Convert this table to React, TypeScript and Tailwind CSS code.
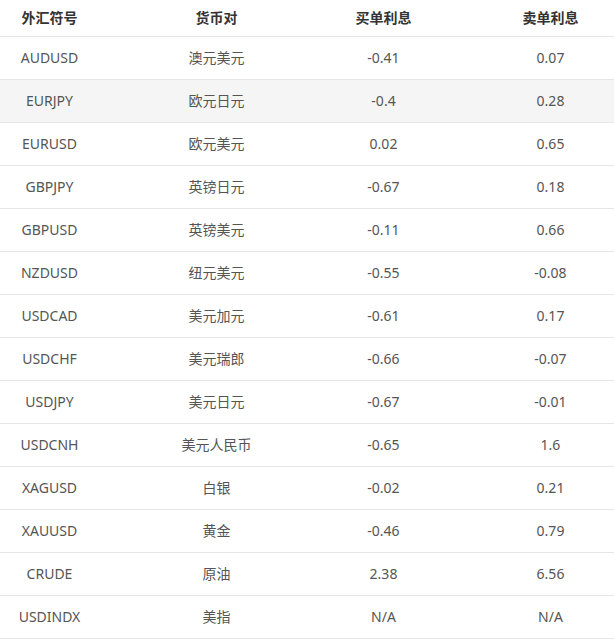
const ROWS: [string, string, string, string][] = [
  ['AUDUSD', '澳元美元', '-0.41', '0.07'],
  ['EURJPY', '欧元日元', '-0.4', '0.28'],
  ['EURUSD', '欧元美元', '0.02', '0.65'],
  ['GBPJPY', '英镑日元', '-0.67', '0.18'],
  ['GBPUSD', '英镑美元', '-0.11', '0.66'],
  ['NZDUSD', '纽元美元', '-0.55', '-0.08'],
  ['USDCAD', '美元加元', '-0.61', '0.17'],
  ['USDCHF', '美元瑞郎', '-0.66', '-0.07'],
  ['USDJPY', '美元日元', '-0.67', '-0.01'],
  ['USDCNH', '美元人民币', '-0.65', '1.6'],
  ['XAGUSD', '白银', '-0.02', '0.21'],
  ['XAUUSD', '黄金', '-0.46', '0.79'],
  ['CRUDE', '原油', '2.38', '6.56'],
  ['USDINDX', '美指', 'N/A', 'N/A'],
];

const HEADERS = ['外汇符号', '货币对', '买单利息', '卖单利息'];

export default function App() {
  return (
    <div
      className="h-[641px] w-[614px] overflow-hidden bg-white"
      style={{ fontFamily: '"Noto Sans", "Noto Sans CJK SC", sans-serif' }}
    >
      <div className="-ml-[34px] w-[668px]">
        <div className="grid h-[37px] grid-cols-4 items-center border-b border-[#e6e6e6] text-sm font-bold text-[#333]">
          {HEADERS.map((h) => (
            <div key={h} className="text-center">
              {h}
            </div>
          ))}
        </div>
        {ROWS.map((row, i) => (
          <div
            key={row[0]}
            className={`grid h-[43px] grid-cols-4 items-center border-b border-[#e6e6e6] text-sm text-[#555] ${
              i === 1 ? 'bg-[#f5f5f5]' : 'bg-white'
            }`}
          >
            {row.map((cell, j) => (
              <div key={j} className="text-center">
                {cell}
              </div>
            ))}
          </div>
        ))}
      </div>
    </div>
  );
}
